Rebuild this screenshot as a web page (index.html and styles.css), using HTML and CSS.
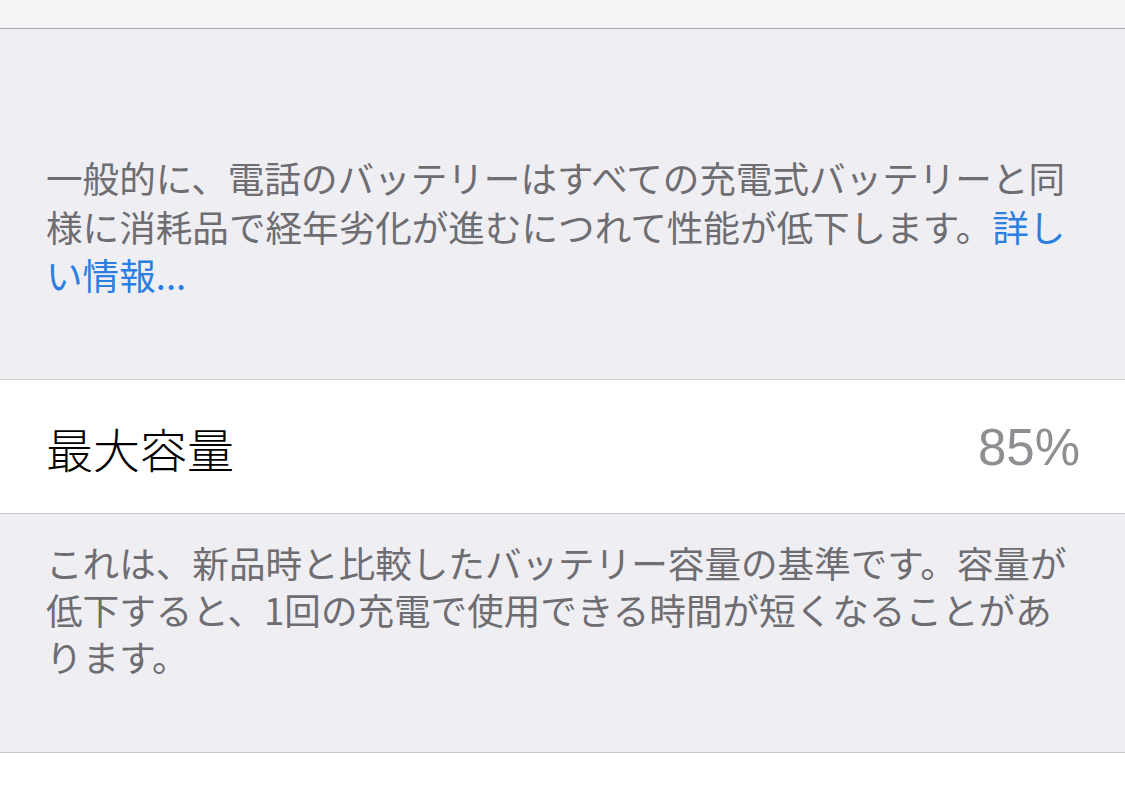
FILE: index.html
```html
<!DOCTYPE html>
<html lang="ja">
<head>
<meta charset="utf-8">
<link rel="stylesheet" href="styles.css">
</head>
<body>
<div class="top"></div>
<div class="footer first">
  <p>一般的に、電話のバッテリーはすべての充電式バッテリーと同様に消耗品で経年劣化が進むにつれて性能が低下します。<a class="link">詳しい情報...</a></p>
</div>
<div class="row">
  <span class="label">最大容量</span>
  <span class="value">85%</span>
</div>
<div class="footer second">
  <p>これは、新品時と比較したバッテリー容量の基準です。容量が低下すると、1回の充電で使用できる時間が短くなることがあります。</p>
</div>
<div class="bottom"></div>
</body>
</html>
```
FILE: styles.css
```css
html, body {
  margin: 0;
  padding: 0;
  background: #ffffff;
  font-family: "Noto Sans CJK JP", "Noto Sans", sans-serif;
}
.top {
  height: 28px;
  background: #f4f4f7;
  border-bottom: 1px solid #a9a9ad;
}
.footer {
  background: #efeef3;
  padding: 0 46px;
  color: #6d6d72;
  font-size: 36.6px;
  line-height: 48.5px;
}
.footer p {
  margin: 0;
}
.first {
  height: 350px;
  padding-top: 125px;
  box-sizing: border-box;
}
.second {
  height: 238px;
  padding-top: 25px;
  box-sizing: border-box;
  line-height: 47px;
}
.link {
  color: #2a7fe0;
}
.row {
  height: 135px;
  box-sizing: border-box;
  border-top: 1px solid #c8c7cc;
  border-bottom: 1px solid #c8c7cc;
  background: #ffffff;
  display: flex;
  align-items: center;
  justify-content: space-between;
  padding: 2px 45px 0 46px;
}
.label {
  font-size: 47px;
  font-weight: 300;
  color: #000000;
}
.value {
  font-family: "Liberation Sans", "Noto Sans", sans-serif;
  font-size: 51px;
  color: #8e8e93;
}
.bottom {
  height: 46px;
  background: #ffffff;
  border-top: 1px solid #c8c7cc;
}
```
